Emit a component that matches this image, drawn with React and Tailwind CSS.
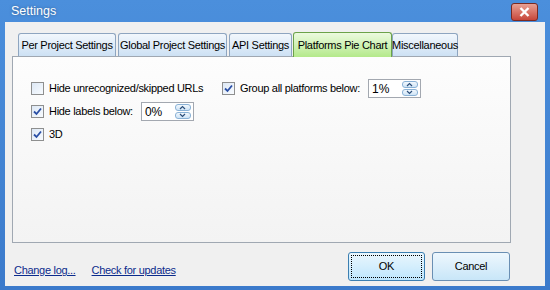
import React from 'react';

const font = { fontFamily: '"Liberation Sans", Arial, sans-serif' };

const Check = ({ checked }) => (
  <span className="w-[13px] h-[13px] border border-[#8e8f8f] bg-gradient-to-br from-[#dde8f5] to-[#f8fbfe] flex items-center justify-center shrink-0">
    {checked && (
      <svg width="9" height="9" viewBox="0 0 9 9">
        <path d="M1 4.5 L3.5 7 L8 1.5" fill="none" stroke="#2a4fa5" strokeWidth="1.8" />
      </svg>
    )}
  </span>
);

const Spinner = ({ value }) => (
  <div className="w-[53px] h-[19px] bg-white border border-[#a3a8b0] flex items-center justify-between pl-[3px] pr-[2px]">
    <span className="text-[12px] text-black tracking-normal">{value}</span>
    <div className="flex flex-col gap-[1px]">
      {['M2 5 L4.5 2.5 L7 5', 'M2 2 L4.5 4.5 L7 2'].map((d, i) => (
        <span key={i} className="w-[16px] h-[7px] rounded-[3px] border border-[#8ab2d6] bg-gradient-to-b from-[#f2f8fd] to-[#cfe4f6] flex items-center justify-center">
          <svg width="9" height="7" viewBox="0 0 9 7">
            <path d={d} fill="none" stroke="#2c4f7a" strokeWidth="1.2" />
          </svg>
        </span>
      ))}
    </div>
  </div>
);

const tabs = [
  { t: 'Per Project Settings', w: 'w-[98px] mr-[2px]' },
  { t: 'Global Project Settings', w: 'w-[109px] mr-[2px]' },
  { t: 'API Settings', w: 'w-[63px] mr-[1px]' },
  { t: 'Platforms Pie Chart', w: 'w-[99px]', active: true },
  { t: 'Miscellaneous', w: 'w-[66px]' },
];

export default function App() {
  return (
    <div className="w-[550px] h-[290px] bg-gradient-to-b from-[#4b8fdc] to-[#3b7acb] flex flex-col text-[11px] tracking-[-0.3px] text-black whitespace-nowrap" style={font}>
      <div className="h-[22px] flex items-center justify-between pl-[11px] pr-[12px] shrink-0">
        <span className="text-[12.5px] tracking-normal text-white [text-shadow:0_0_3px_rgba(0,0,0,0.35)]">Settings</span>
        <span className="w-[27px] h-[18px] mt-[2px] rounded-[3px] border border-[#7a2a22] bg-gradient-to-b from-[#e8a094] to-[#c6453a] flex items-center justify-center">
          <svg width="11" height="10" viewBox="0 0 11 10">
            <path d="M1.5 1 L9.5 9 M9.5 1 L1.5 9" stroke="white" strokeWidth="2.4" />
          </svg>
        </span>
      </div>
      <div className="flex-1 mx-[5px] mb-[4px] bg-[#f0f0f0] flex flex-col pt-[9px]">
        <div className="flex items-end pl-[13px] h-[25px]">
          {tabs.map(({ t, w, active }) =>
            active ? (
              <div key={t} className={`${w} h-[25px] -mb-[1px] relative z-10 border border-[#6ca24a] border-b-0 rounded-t-[3px] bg-gradient-to-b from-[#ecfadf] to-[#b4e98a] flex items-center justify-center`}>
                {t}
              </div>
            ) : (
              <div key={t} className={`${w} h-[23px] border border-[#8ea5c0] border-b-0 rounded-t-[3px] bg-gradient-to-b from-[#f2f7fc] to-[#cde1f4] flex items-center justify-center`}>
                {t}
              </div>
            )
          )}
        </div>
        <div className="ml-[7px] w-[499px] h-[187px] border border-[#a0a8b2] bg-gradient-to-b from-[#fdfdfd] to-[#f3f3f3] pt-[22px] pl-[18px] flex flex-col gap-[4px]">
          <div className="flex items-center h-[19px]">
            <div className="flex items-center gap-[5px] w-[191px]">
              <Check />
              <span>Hide unrecognized/skipped URLs</span>
            </div>
            <div className="flex items-center gap-[5px]">
              <Check checked />
              <span>Group all platforms below:</span>
              <span className="ml-[3px]"><Spinner value="1%" /></span>
            </div>
          </div>
          <div className="flex items-center gap-[5px] h-[19px]">
            <Check checked />
            <span>Hide labels below:</span>
            <span className="ml-[3px]"><Spinner value="0%" /></span>
          </div>
          <div className="flex items-center gap-[5px] h-[19px]">
            <Check checked />
            <span>3D</span>
          </div>
        </div>
        <div className="flex items-center justify-between mt-[9px] pl-[9px] pr-[35px]">
          <div className="flex gap-[16px] mt-[8px] text-[#0b2b8c] underline">
            <span>Change log...</span>
            <span>Check for updates</span>
          </div>
          <div className="flex gap-[7px]">
            <button className="w-[77px] h-[29px] rounded-[3px] border border-[#3c7fb1] bg-gradient-to-b from-[#eaf6fd] to-[#bee6fd] p-[2px]">
              <span className="w-full h-full border border-dotted border-black flex items-center justify-center">OK</span>
            </button>
            <button className="w-[78px] h-[29px] rounded-[3px] border border-[#6a8fb3] bg-gradient-to-b from-[#eef7fd] to-[#c8e6f8] flex items-center justify-center">
              Cancel
            </button>
          </div>
        </div>
      </div>
    </div>
  );
}
